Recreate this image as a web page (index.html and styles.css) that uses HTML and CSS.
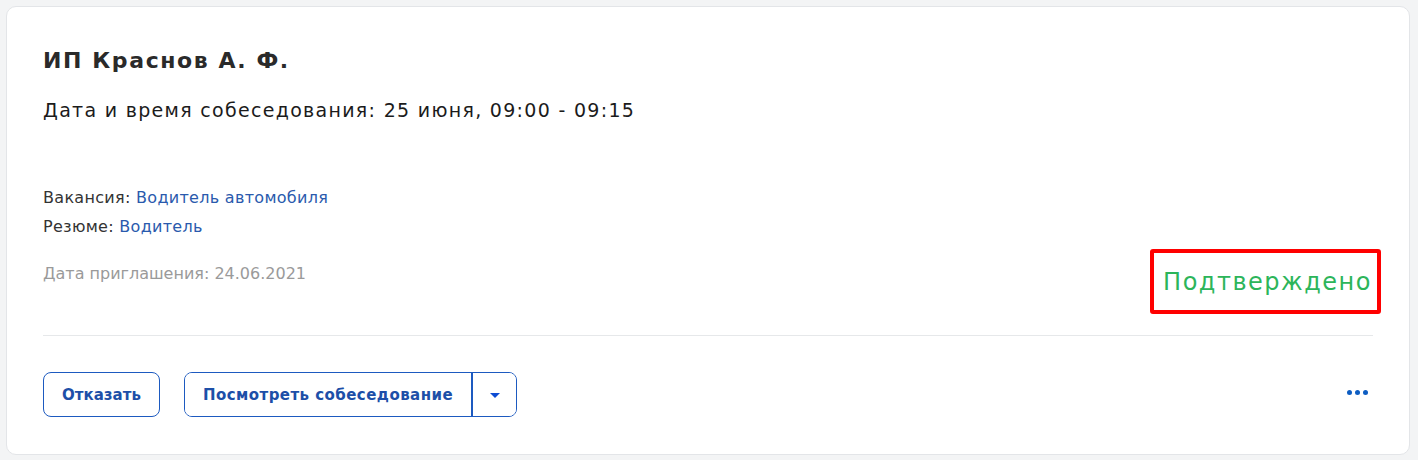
FILE: index.html
```html
<!DOCTYPE html>
<html lang="ru">
<head>
<meta charset="utf-8">
<link rel="stylesheet" href="styles.css">
</head>
<body>
<div class="card">
  <div class="card-body">
    <h2 class="title">ИП Краснов А. Ф.</h2>
    <p class="when">Дата и время собеседования: 25 июня, 09:00 - 09:15</p>
    <div class="info">
      <div class="info-line">Вакансия: <a class="link">Водитель автомобиля</a></div>
      <div class="info-line">Резюме: <a class="link">Водитель</a></div>
    </div>
    <div class="status-row">
      <div class="invited">Дата приглашения: 24.06.2021</div>
      <div class="status-box"><span class="status">Подтверждено</span></div>
    </div>
  </div>
  <div class="divider"></div>
  <div class="actions">
    <div class="buttons">
      <button class="btn">Отказать</button>
      <div class="split">
        <button class="split-main">Посмотреть собеседование</button>
        <button class="split-arrow"><svg width="10" height="6" viewBox="0 0 10 6"><path d="M0 0h10L5 5z" fill="#0d4cd3"/></svg></button>
      </div>
    </div>
    <button class="more"><span></span><span></span><span></span></button>
  </div>
</div>
</body>
</html>
```

FILE: styles.css
```css
* { box-sizing: border-box; }
html, body { margin: 0; }
body {
  background: #f3f4f5;
  padding: 6px 8px 5px 6px;
  font-family: "DejaVu Sans", "Open Sans", Arial, sans-serif;
  color: #1f1f1f;
}
.card {
  background: #fff;
  border: 1px solid #e3e5e8;
  border-radius: 10px;
  height: 449px;
  padding: 0 36px;
}
.card-body { padding-top: 40px; }
.title {
  margin: 0;
  font-size: 22px;
  line-height: 28px;
  font-weight: 600;
  color: #2a2a2a;
  letter-spacing: 1.6px;
}
.when {
  margin: 23px 0 0;
  font-size: 19px;
  line-height: 24px;
  font-weight: 400;
  color: #1b1b1b;
  letter-spacing: 1.3px;
}
.info { margin-top: 61px; }
.info-line {
  font-size: 16px;
  line-height: 29px;
  color: #333;
  letter-spacing: 0.3px;
}
.link { color: #2a5aad; }
.status-row {
  display: flex;
  justify-content: space-between;
  align-items: flex-start;
  margin-top: 11px;
}
.invited {
  font-size: 16px;
  line-height: 22px;
  color: #9a9a9a;
  padding-top: 11px;
}
.status-box {
  border: 4px solid #ff0000;
  border-radius: 3px;
  width: 231px;
  height: 65px;
  margin-right: -8px;
  margin-top: -3px;
  display: flex;
  align-items: center;
  justify-content: center;
  padding-left: 4px;
}
.status {
  font-size: 24px;
  color: #2cb55a;
  letter-spacing: 1.5px;
}
.divider {
  height: 1px;
  background: #e6e8ea;
  margin-top: 21px;
}
.actions {
  display: flex;
  justify-content: space-between;
  align-items: center;
  margin-top: 36px;
}
.buttons { display: flex; gap: 24px; }
button {
  font-family: inherit;
  background: #fff;
  cursor: pointer;
}
.btn, .split {
  height: 45px;
  border: 1.5px solid #1d5ac0;
  border-radius: 8px;
}
.btn {
  width: 117px;
  font-size: 15px;
  font-weight: 600;
  color: #1d4fa8;
}
.split { display: flex; width: 333px; overflow: hidden; }
.split-main {
  border: none;
  border-right: 2px solid #1d5ac0;
  width: 288px;
  font-size: 15px;
  font-weight: 600;
  color: #1d4fa8;
  letter-spacing: 0.45px;
}
.split-arrow {
  border: none;
  flex: 1;
  display: flex;
  align-items: center;
  justify-content: center;
  padding: 2px 0 0;
}
.more {
  border: none;
  display: flex;
  gap: 3px;
  padding: 0;
  margin-right: 5px;
  margin-top: -4px;
}
.more span {
  width: 5px;
  height: 5px;
  border-radius: 50%;
  background: #0d5dc2;
}
```
